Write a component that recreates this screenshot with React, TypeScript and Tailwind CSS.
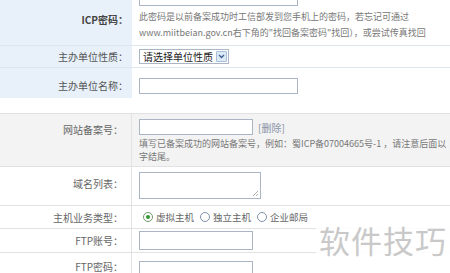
const CJK = '"Noto Sans CJK SC", "Liberation Sans", sans-serif'

function Radio({ checked, label }: { checked?: boolean; label: string }) {
  return (
    <label className="flex items-center gap-[3px]">
      <span
        className={`flex h-[10px] w-[10px] items-center justify-center rounded-full border bg-white ${
          checked ? 'border-[#6f9a6f]' : 'border-[#7f93ab]'
        }`}
      >
        {checked && <span className="h-[4px] w-[4px] rounded-full bg-[#2f9a2f]" />}
      </span>
      <span>{label}</span>
    </label>
  )
}

const inputCls = 'block border border-[#aab6c6] bg-white'

export default function App() {
  return (
    <div
      className="relative h-[273px] w-[450px] overflow-hidden bg-white text-[10px]"
      style={{ fontFamily: CJK }}
    >
      <div className="-mt-[14px]">
        {/* top section */}
        <div className="flex border-b border-[#dde6ee]">
          <div className="flex w-[132px] shrink-0 items-center justify-end bg-[#e8f1fa] pr-[4px] pt-[8px] font-bold text-[#444]">
            ICP密码：
          </div>
          <div className="flex-1 pl-[7px] pr-1 pt-[4px] pb-[4px]">
            <div className={`${inputCls} h-[16px] w-[159px]`} />
            <div className="mt-[3px] whitespace-nowrap text-[9px] leading-[16px] text-[#777]">
              <div>此密码是以前备案成功时工信部发到您手机上的密码，若忘记可通过</div>
              <div>www.miitbeian.gov.cn右下角的"找回备案密码"找回），或尝试传真找回</div>
            </div>
          </div>
        </div>

        <div className="flex h-[22px] border-b border-[#dde6ee]">
          <div className="flex w-[132px] shrink-0 items-center justify-end bg-[#e8f1fa] pr-[4px] text-[#555]">
            主办单位性质：
          </div>
          <div className="flex flex-1 items-center pl-[7px]">
            <div className="flex h-[15px] w-[90px] items-center justify-between border border-[#aab6c6] bg-white pl-[3px] pr-[1px] text-[10px] text-[#222]">
              <span>请选择单位性质</span>
              <span className="flex h-[11px] w-[11px] items-center justify-center rounded-[1px] border border-[#a9bfd9] bg-[#dce9f7]">
                <svg width="7" height="5" viewBox="0 0 7 5">
                  <path d="M1 1 L3.5 3.5 L6 1" fill="none" stroke="#3d5f8f" strokeWidth="1.3" />
                </svg>
              </span>
            </div>
          </div>
        </div>

        <div className="flex h-[30px]">
          <div className="flex w-[132px] shrink-0 items-center justify-end bg-[#e8f1fa] pr-[4px] pt-[4px] text-[#555]">
            主办单位名称：
          </div>
          <div className="flex flex-1 items-center pl-[7px] pt-[6px]">
            <div className={`${inputCls} h-[16px] w-[159px]`} />
          </div>
        </div>

        <div className="h-[15px]" />

        {/* website section */}
        <div className="flex border-y border-[#e2e2e2] bg-[#f3f3f3] text-[#666]">
          <div className="w-[132px] shrink-0 border-r border-[#e2e2e2] pr-[8px] pt-[8px] text-right">
            网站备案号：
          </div>
          <div className="min-w-0 flex-1 pl-[7px] pt-[5px] pb-[3px]">
            <div className="flex items-center gap-[5px]">
              <div className={`${inputCls} h-[16px] w-[114px]`} />
              <span className="text-[#8a93a8]">[删除]</span>
            </div>
            <div className="mt-[2px] overflow-hidden whitespace-nowrap text-[9px] leading-[13px] text-[#777]">
              <div>填写已备案成功的网站备案号，例如：蜀ICP备07004665号-1 ，请注意后面以</div>
              <div>字结尾。</div>
            </div>
          </div>
        </div>

        <div className="flex h-[39px] border-b border-[#e2e2e2] text-[#666]">
          <div className="w-[132px] shrink-0 border-r border-[#e2e2e2] pr-[8px] pt-[9px] text-right">
            域名列表：
          </div>
          <div className="flex-1 pl-[7px] pt-[5px]">
            <div className={`${inputCls} relative h-[27px] w-[122px]`}>
              <svg className="absolute bottom-[1px] right-[1px]" width="7" height="7" viewBox="0 0 7 7">
                <path d="M1 6 L6 1 M4 6 L6 4" stroke="#999" strokeWidth="0.8" />
              </svg>
            </div>
          </div>
        </div>

        <div className="flex h-[23px] border-b border-[#e2e2e2] text-[#666]">
          <div className="flex w-[132px] shrink-0 items-center justify-end border-r border-[#e2e2e2] pr-[8px]">
            主机业务类型：
          </div>
          <div className="flex flex-1 items-center gap-[6px] pl-[11px] text-[9.5px]">
            <Radio checked label="虚拟主机" />
            <Radio label="独立主机" />
            <Radio label="企业邮局" />
          </div>
        </div>

        <div className="flex h-[24px] border-b border-[#e2e2e2] text-[#666]">
          <div className="flex w-[132px] shrink-0 items-center justify-end border-r border-[#e2e2e2] pr-[8px]">
            FTP账号：
          </div>
          <div className="flex flex-1 items-center pl-[7px]">
            <div className={`${inputCls} h-[19px] w-[114px]`} />
          </div>
        </div>

        <div className="flex h-[30px] text-[#666]">
          <div className="flex w-[132px] shrink-0 items-start justify-end border-r border-[#e2e2e2] pr-[8px] pt-[6px]">
            FTP密码：
          </div>
          <div className="flex-1 pl-[7px] pt-[8px]">
            <div className={`${inputCls} h-[19px] w-[114px]`} />
          </div>
        </div>
      </div>

      <div className="absolute left-[316px] top-[214px] flex h-[50px] w-[134px] items-center justify-center bg-white/90 text-[31px] leading-none tracking-[1px] text-[#c9c9c9]">
        软件技巧
      </div>
    </div>
  )
}
